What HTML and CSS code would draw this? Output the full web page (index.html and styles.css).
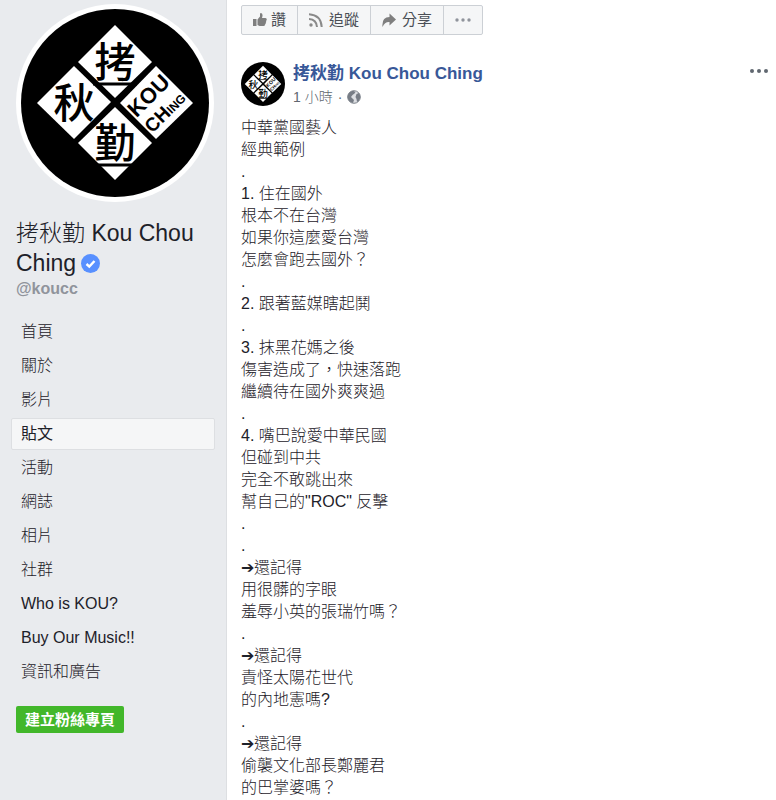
FILE: index.html
```html
<!DOCTYPE html>
<html lang="zh-Hant">
<head>
<meta charset="utf-8">
<meta name="viewport" content="width=device-width, initial-scale=1">
<title>拷秋勤 Kou Chou Ching</title>
<link rel="stylesheet" href="styles.css">
</head>
<body>
<svg class="defs" aria-hidden="true">
  <symbol id="emblem" viewBox="0 0 188 188">
    <circle cx="94" cy="94" r="94" fill="#000"/>
    <g fill="#fff">
      <path d="M94 16L131 53L94 89L57 53Z"/>
      <path d="M16 94L53 57L90 93L53 130Z"/>
      <path d="M94 98L131 134L94 171L57 134Z"/>
      <path d="M135 57L172 94L135 130L99 94Z"/>
    </g>
    <g class="emblem-han" fill="#000">
      <text x="94" y="68">拷</text>
      <text x="53" y="109">秋</text>
      <text x="94" y="149">勤</text>
    </g>
    <path d="M72 75H116M72 156H116" stroke="#000" stroke-width="3"/>
    <g class="emblem-latin" fill="#000" transform="rotate(-45 135 94)">
      <text class="emblem-large" x="135" y="91">KOU</text>
      <text x="135" y="113"><tspan class="emblem-medium">CH</tspan><tspan class="emblem-small">ING</tspan></text>
    </g>
  </symbol>
</svg>
<div class="page">
  <aside class="sidebar">
    <a class="cover-avatar" href="#" aria-label="拷秋勤"><svg><use href="#emblem"/></svg></a>
    <h1 class="page-name">拷秋勤 Kou Chou Ching <svg class="verified" viewBox="0 0 19 19" aria-hidden="true"><circle cx="9.500" cy="9.500" r="9.500" fill="#5890ff"/><path d="M5.500 10L8.300 12.600L13.500 7" fill="none" stroke="#fff" stroke-width="2.400"/></svg></h1>
    <a class="handle" href="#">@koucc</a>
    <nav class="menu">
      <a href="#">首頁</a>
      <a href="#">關於</a>
      <a href="#">影片</a>
      <a href="#" class="active" aria-current="page">貼文</a>
      <a href="#">活動</a>
      <a href="#">網誌</a>
      <a href="#">相片</a>
      <a href="#">社群</a>
      <a href="#">Who is KOU?</a>
      <a href="#">Buy Our Music!!</a>
      <a href="#">資訊和廣告</a>
    </nav>
    <button class="create" type="button">建立粉絲專頁</button>
  </aside>
  <main class="content">
    <div class="actions">
      <button type="button"><svg class="icon" viewBox="0 0 14 14" aria-hidden="true"><path d="M0 6H3.500V13H0ZM4.500 6.500L7 3.500V1Q7 0 8 0Q9.800 .3 9.500 3L9 5H12.500Q14 5.200 13.700 6.700Q13.600 7.600 13 8Q13.500 9 12.700 10Q12.900 11 12 11.500Q12 13 10.500 13H6.500L4.500 12Z" fill="#7f7f7f"/></svg>讚</button>
      <button type="button"><svg class="icon" viewBox="0 0 14 14" aria-hidden="true"><circle cx="2" cy="12" r="1.700" fill="#8a8a8a"/><path d="M0 6Q7.500 6.500 8 14M0 1.300Q12 2 12.700 14" fill="none" stroke="#8a8a8a" stroke-width="2"/></svg>追蹤</button>
      <button type="button"><svg class="icon" viewBox="0 0 14 14" aria-hidden="true"><path d="M7.500 .5L14 6.500L7.500 12.500V9Q3 8.500 .5 14Q-.5 4 7.500 4Z" fill="#7f7f7f"/></svg>分享</button>
      <button class="overflow" type="button" aria-label="更多"><svg class="more" viewBox="0 0 16 4" aria-hidden="true"><g fill="#90949c"><circle cx="2" cy="2" r="1.700"/><circle cx="8" cy="2" r="1.700"/><circle cx="14" cy="2" r="1.700"/></g></svg></button>
    </div>
    <article class="post">
      <header class="post-header">
        <a class="post-avatar" href="#" aria-label="拷秋勤"><svg><use href="#emblem"/></svg></a>
        <div class="byline">
          <a class="author" href="#">拷秋勤 Kou Chou Ching</a>
          <div class="meta"><a href="#">1 小時</a><span>·</span><svg class="globe" viewBox="0 0 14 14" aria-hidden="true"><circle cx="7" cy="7" r="6.300" fill="#dcdee2" stroke="#7f858d"/><path d="M.7 6Q1.500 1.500 6 .7L8.500 2L7.500 3.500L5.500 5L4 7L5.500 8.500L7 10L6 13Q1.500 12 .7 8ZM9.500 4L12 3Q13.500 5 13.300 8Q12.500 11 10 12L9.500 9L8.500 7Z" fill="#777d86"/></svg></div>
        </div>
        <button class="post-more" type="button" aria-label="貼文選項"><svg viewBox="0 0 18 4" aria-hidden="true"><g fill="#606770"><circle cx="2" cy="2" r="2"/><circle cx="9" cy="2" r="2"/><circle cx="16" cy="2" r="2"/></g></svg></button>
      </header>
      <p class="post-text">中華黨國藝人<br>經典範例<br>.<br>1. 住在國外<br>根本不在台灣<br>如果你這麼愛台灣<br>怎麼會跑去國外？<br>.<br>2. 跟著藍媒瞎起鬨<br>.<br>3. 抹黑花媽之後<br>傷害造成了，快速落跑<br>繼續待在國外爽爽過<br>.<br>4. 嘴巴說愛中華民國<br>但碰到中共<br>完全不敢跳出來<br>幫自己的"ROC" 反擊<br>.<br>.<br>➔還記得<br>用很髒的字眼<br>羞辱小英的張瑞竹嗎？<br>.<br>➔還記得<br>責怪太陽花世代<br>的內地憲嗎?<br>.<br>➔還記得<br>偷襲文化部長鄭麗君<br>的巴掌婆嗎？</p>
    </article>
  </main>
</div>
</body>
</html>
```
FILE: styles.css
```css
* { box-sizing: border-box; }
body {
  margin: 0;
  background: #fff;
  color: #1d2129;
  font: 300 16px/22px "Liberation Sans", "Noto Sans CJK TC", sans-serif;
}
a { color: inherit; text-decoration: none; }
button { font: inherit; color: inherit; cursor: pointer; }
svg { display: block; }
.defs { position: absolute; width: 0; height: 0; }

.emblem-han { font: 500 41px "Noto Sans CJK TC", sans-serif; text-anchor: middle; }
.emblem-latin { font-family: "Liberation Sans", sans-serif; font-weight: 700; text-anchor: middle; }
.emblem-large { font-size: 22px; }
.emblem-medium { font-size: 19px; }
.emblem-small { font-size: 12px; }

.page { display: flex; min-height: 100vh; }
.sidebar {
  flex: 0 0 227px;
  padding: 4px 11px 24px;
  background: #e9ebee;
  border-right: 1px solid #dddfe2;
}
.cover-avatar {
  display: block;
  width: 198px;
  margin-left: 5px;
  padding: 5px;
  border-radius: 50%;
  background: #fff;
}
.cover-avatar svg { width: 188px; height: 188px; }
.page-name {
  margin: 16px 5px 0;
  font-size: 23px;
  line-height: 30px;
  font-weight: 300;
}
.verified { display: inline-block; width: 19px; height: 19px; margin-left: -1px; vertical-align: -2px; }
.handle { display: block; margin: 0 5px; color: #90949c; font-weight: 700; line-height: 22px; }
.menu { display: flex; flex-direction: column; gap: 2px; margin-top: 16px; }
.menu a { height: 32px; padding: 0 9px; border: 1px solid transparent; border-radius: 2px; line-height: 30px; }
.menu .active { width: 204px; background: #f5f6f7; border-color: #dddfe2; font-weight: 400; }
.create {
  display: block;
  height: 27px;
  margin: 18px 5px 0;
  padding: 0 9px;
  border: 0;
  border-radius: 2px;
  background: #42b72a;
  color: #fff;
  font-size: 15px;
  font-weight: 700;
}

.content { flex: 1; min-width: 0; padding: 5px 8px 0 14px; }
.actions { display: inline-flex; height: 30px; border: 1px solid #ccd0d5; border-radius: 2px; background: #f5f6f7; }
.actions button {
  display: flex;
  align-items: center;
  gap: 4px;
  padding: 0 11px;
  border: 0;
  background: none;
  color: #4b4f56;
  font-size: 15px;
  font-weight: 400;
}
.actions button + button { gap: 6px; border-left: 1px solid #ccd0d5; }
.actions button + .overflow { padding: 0 11px; }
.icon { width: 14px; height: 14px; }
.more { width: 16px; height: 4px; }
.post-header { display: flex; gap: 8px; margin-top: 27px; }
.post-avatar svg { width: 44px; height: 44px; }
.byline { flex: 1; }
.author { display: block; color: #385898; font-size: 17px; font-weight: 700; line-height: 24px; }
.meta { display: flex; align-items: center; gap: 5px; color: #616770; font-size: 14px; line-height: 22px; }
.globe { width: 14px; height: 14px; }
.post-more { align-self: flex-start; padding: 7px 0; border: 0; background: none; }
.post-more svg { width: 18px; height: 4px; }
.post-text { margin: 9px 0 0; }
```
